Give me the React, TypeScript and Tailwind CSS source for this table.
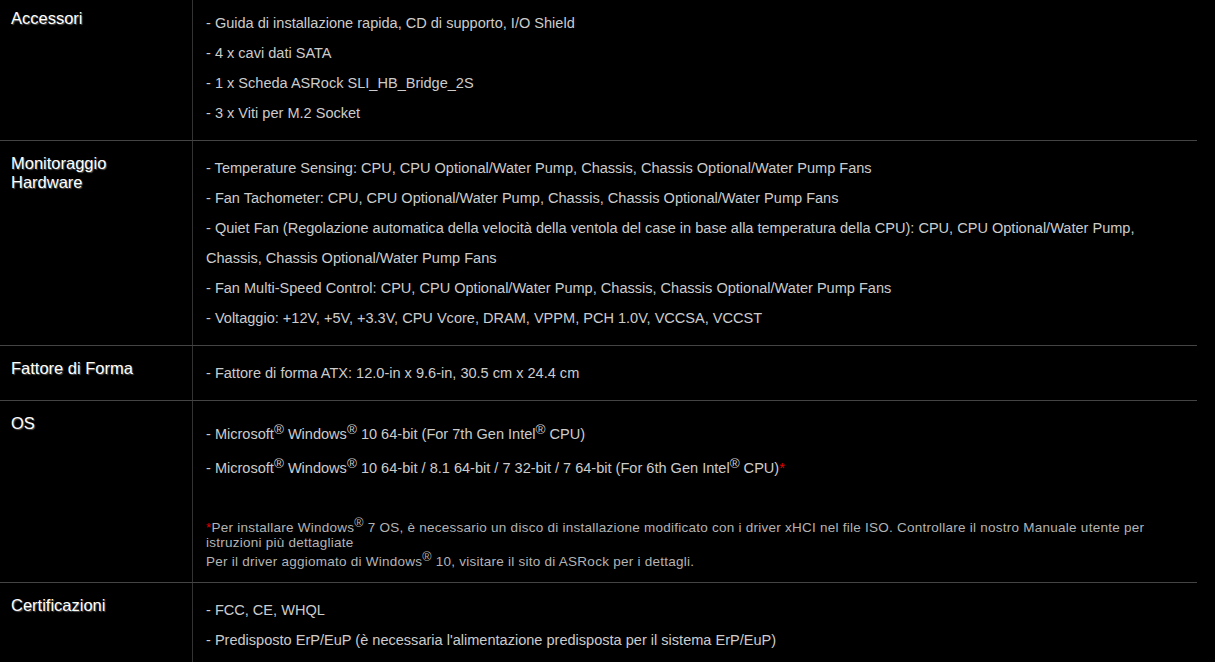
import React from "react";

const Sup = ({ small }: { small?: boolean }) => (
  <span
    className={
      small
        ? "relative -top-[5px] text-[12.5px] leading-none"
        : "relative -top-[5px] text-[13.5px] leading-none"
    }
  >
    ®
  </span>
);

function Row({
  label,
  children,
  last,
}: {
  label: React.ReactNode;
  children: React.ReactNode;
  last?: boolean;
}) {
  return (
    <div className={"flex " + (last ? "" : "border-b border-[#444]")}>
      <div className="w-[193px] shrink-0 border-r border-[#333] pl-[11px] pt-[13px] text-[16.5px] leading-[19px] text-white [text-shadow:1px_1px_1px_#555]">
        {label}
      </div>
      <div className="flex-1 pl-[13px] pr-[20px] py-[12px] text-[14.55px] leading-[30px] text-[#cccccc]">
        {children}
      </div>
    </div>
  );
}

export default function App() {
  return (
    <div className="min-h-[662px] w-full overflow-hidden bg-black font-['Liberation_Sans',Arial,sans-serif]">
      <div className="-mt-[4px] w-[1197px]">
        <Row label="Accessori">
          <div>- Guida di installazione rapida, CD di supporto, I/O Shield</div>
          <div>- 4 x cavi dati SATA</div>
          <div>- 1 x Scheda ASRock SLI_HB_Bridge_2S</div>
          <div>- 3 x Viti per M.2 Socket</div>
        </Row>
        <Row
          label={
            <>
              Monitoraggio
              <br />
              Hardware
            </>
          }
        >
          <div>
            - Temperature Sensing: CPU, CPU Optional/Water Pump, Chassis, Chassis
            Optional/Water Pump Fans
          </div>
          <div>
            - Fan Tachometer: CPU, CPU Optional/Water Pump, Chassis, Chassis
            Optional/Water Pump Fans
          </div>
          <div>
            - Quiet Fan (Regolazione automatica della velocità della ventola del
            case in base alla temperatura della CPU): CPU, CPU Optional/Water
            Pump,
            <br />
            Chassis, Chassis Optional/Water Pump Fans
          </div>
          <div>
            - Fan Multi-Speed Control: CPU, CPU Optional/Water Pump, Chassis,
            Chassis Optional/Water Pump Fans
          </div>
          <div>
            - Voltaggio: +12V, +5V, +3.3V, CPU Vcore, DRAM, VPPM, PCH 1.0V,
            VCCSA, VCCST
          </div>
        </Row>
        <Row label="Fattore di Forma">
          <div>- Fattore di forma ATX: 12.0-in x 9.6-in, 30.5 cm x 24.4 cm</div>
        </Row>
        <Row label="OS">
          <div className="pt-[4px] leading-[34px]">
            <div>
              - Microsoft<Sup /> Windows<Sup /> 10 64-bit (For 7th Gen Intel
              <Sup /> CPU)
            </div>
            <div>
              - Microsoft<Sup /> Windows<Sup /> 10 64-bit / 8.1 64-bit / 7
              32-bit / 7 64-bit (For 6th Gen Intel<Sup /> CPU)
              <span className="text-[#e00000]">*</span>
            </div>
          </div>
          <div className="mt-[35px] pb-[1px] text-[13.5px] leading-[15px] tracking-[0.25px] text-[#b4b4b4]">
            <div>
              <span className="text-[#e00000]">*</span>Per installare Windows
              <Sup small /> 7 OS, è necessario un disco di installazione
              modificato con i driver xHCI nel file ISO. Controllare il nostro
              Manuale utente per
              <br />
              istruzioni più dettagliate
            </div>
            <div className="pt-[4px]">
              Per il driver aggiomato di Windows<Sup small /> 10, visitare il
              sito di ASRock per i dettagli.
            </div>
          </div>
        </Row>
        <Row label="Certificazioni" last>
          <div>- FCC, CE, WHQL</div>
          <div>
            - Predisposto ErP/EuP (è necessaria l'alimentazione predisposta per
            il sistema ErP/EuP)
          </div>
        </Row>
      </div>
    </div>
  );
}
